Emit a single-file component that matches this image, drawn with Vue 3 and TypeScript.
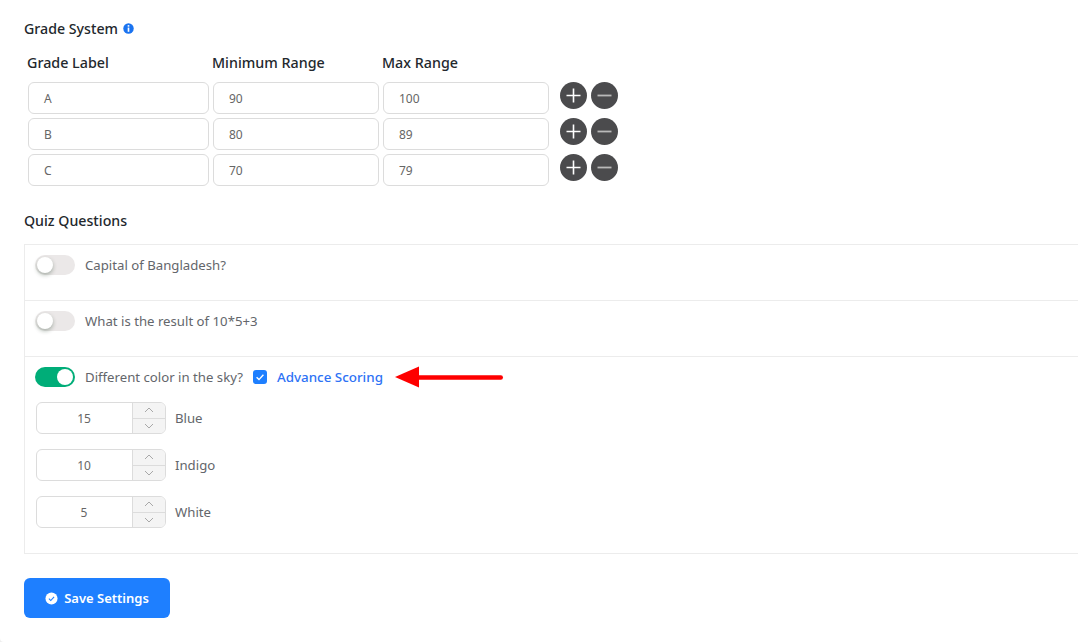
<script setup lang="ts">
interface Grade { label: string; min: string; max: string }
interface Answer { score: number; name: string }

const grades: Grade[] = [
  { label: 'A', min: '90', max: '100' },
  { label: 'B', min: '80', max: '89' },
  { label: 'C', min: '70', max: '79' },
]
const answers: Answer[] = [
  { score: 15, name: 'Blue' },
  { score: 10, name: 'Indigo' },
  { score: 5, name: 'White' },
]
</script>

<template>
  <div class="page">
    <div class="heading">
      <span>Grade System</span>
      <svg class="info" viewBox="0 0 12 12" width="11" height="11">
        <circle cx="6" cy="6" r="5.7" fill="#1a73f0" />
        <rect x="5.1" y="2.3" width="1.8" height="1.7" fill="#fff" />
        <rect x="5.1" y="5" width="1.8" height="4.6" fill="#fff" />
      </svg>
    </div>

    <div class="grade-head">
      <span class="c1">Grade Label</span>
      <span class="c2">Minimum Range</span>
      <span class="c3">Max Range</span>
    </div>

    <div class="grade-rows">
      <div v-for="g in grades" :key="g.label" class="grade-row">
        <div class="field w1">{{ g.label }}</div>
        <div class="field w2">{{ g.min }}</div>
        <div class="field w2">{{ g.max }}</div>
        <div class="round-btns">
          <span class="round">
            <svg viewBox="0 0 27 27" width="27" height="27">
              <path d="M13.5 6.5v14M6.5 13.5h14" stroke="#fff" stroke-width="1.6" />
            </svg>
          </span>
          <span class="round">
            <svg viewBox="0 0 27 27" width="27" height="27">
              <path d="M6.5 13.5h14" stroke="#b9b9b9" stroke-width="1.8" />
            </svg>
          </span>
        </div>
      </div>
    </div>

    <div class="heading quiz-heading">Quiz Questions</div>

    <div class="quiz-box">
      <div class="question">
        <span class="toggle"><i class="knob"></i></span>
        <span class="q-text">Capital of Bangladesh?</span>
      </div>
      <div class="question">
        <span class="toggle"><i class="knob"></i></span>
        <span class="q-text">What is the result of 10*5+3</span>
      </div>
      <div class="question open">
        <div class="q-main">
          <span class="toggle on"><i class="knob"></i></span>
          <span class="q-text">Different color in the sky?</span>
          <span class="check">
            <svg viewBox="0 0 14 14" width="14" height="14">
              <path d="M3.6 7.2l2.4 2.4 4.4-4.8" fill="none" stroke="#fff" stroke-width="1.4" />
            </svg>
          </span>
          <span class="advance">Advance Scoring</span>
          <svg class="arrow" viewBox="0 0 110 22" width="110" height="22">
            <path d="M22 11.5h83.8" stroke="#fe0000" stroke-width="4.4" stroke-linecap="round" />
            <path d="M0 11L24 0.5v21z" fill="#fe0000" />
          </svg>
        </div>
        <div class="answers">
          <div v-for="a in answers" :key="a.name" class="answer">
            <div class="number">
              <div class="num-val">{{ a.score }}</div>
              <div class="spin">
                <span class="spin-btn">
                  <svg viewBox="0 0 10 6" width="10" height="6"><path d="M1 5l4-4 4 4" fill="none" stroke="#a8a8a8" /></svg>
                </span>
                <span class="spin-btn">
                  <svg viewBox="0 0 10 6" width="10" height="6"><path d="M1 1l4 4 4-4" fill="none" stroke="#a8a8a8" /></svg>
                </span>
              </div>
            </div>
            <span class="q-text">{{ a.name }}</span>
          </div>
        </div>
      </div>
    </div>

    <button class="save" type="button">
      <svg viewBox="0 0 14 14" width="13" height="13">
        <circle cx="7" cy="7" r="6.5" fill="#fff" />
        <path d="M4.2 7.2l2 2 3.6-4" fill="none" stroke="#1e7fff" stroke-width="1.2" />
      </svg>
      <span>Save Settings</span>
    </button>
  </div>
</template>

<style>
html, body { margin: 0; background: #eee; overflow: hidden; }
</style>

<style scoped>
.page {
  width: 1078px;
  height: 642px;
  box-sizing: border-box;
  padding: 18px 0 0 24px;
  overflow: hidden;
  font-family: "Noto Sans", "Open Sans", sans-serif;
  font-size: 13.2px;
  color: #5f6368;
  background: #fff;
  border-bottom-left-radius: 4px;
}
.heading {
  display: flex;
  align-items: center;
  gap: 5px;
  height: 20px;
  font-size: 14.2px;
  font-weight: 500;
  color: #23282d;
}
.grade-head {
  display: flex;
  margin-top: 14px;
  height: 20px;
  align-items: center;
  font-size: 14.3px;
  font-weight: 500;
  color: #23282d;
}
.c1 { width: 185px; padding-left: 3px; box-sizing: border-box; }
.c2 { width: 170px; padding-left: 3px; box-sizing: border-box; }
.c3 { padding-left: 3px; }
.grade-rows {
  display: flex;
  flex-direction: column;
  gap: 4px;
  margin-top: 10px;
  padding-left: 4px;
}
.grade-row { display: flex; align-items: flex-start; gap: 4px; }
.field {
  box-sizing: border-box;
  height: 32px;
  line-height: 32px;
  padding-left: 15px;
  border: 1px solid #dcdcdc;
  border-radius: 6px;
  font-size: 12px;
  color: #666;
}
.w1 { width: 181px; }
.w2 { width: 166px; }
.round-btns { display: flex; gap: 4px; margin-left: 7px; }
.round {
  display: block;
  width: 27px;
  height: 27px;
  border-radius: 50%;
  background: #4b4b4d;
}
.round svg { display: block; }
.quiz-heading { margin-top: 24px; }
.quiz-box {
  margin-top: 14px;
  width: 1060px;
  border: 1px solid #ececec;
  box-sizing: border-box;
}
.question {
  height: 56px;
  box-sizing: border-box;
  padding: 10px 0 0 10px;
  display: flex;
  align-items: flex-start;
  gap: 10px;
  border-bottom: 1px solid #ececec;
}
.question.open {
  display: block;
  height: 196px;
  border-bottom: 0;
}
.q-main { display: flex; align-items: center; gap: 10px; height: 20px; position: relative; }
.q-text { line-height: 20px; color: #63666b; }
.toggle {
  display: block;
  flex: none;
  width: 40px;
  height: 20px;
  border-radius: 10px;
  background: #ebe8e8;
  position: relative;
}
.toggle.on { background: #00ad78; }
.knob {
  position: absolute;
  top: 2px;
  left: 2px;
  width: 16px;
  height: 16px;
  border-radius: 50%;
  background: #fff;
  box-shadow: 0 2px 4px rgba(0, 35, 11, 0.3);
}
.toggle.on .knob { left: 22px; box-shadow: none; }
.check {
  display: block;
  width: 14px;
  height: 14px;
  border-radius: 3px;
  background: #1e7fff;
}
.check svg { display: block; }
.advance { color: #2e72f5; font-weight: 500; line-height: 20px; font-size: 13.4px; }
.arrow { position: absolute; left: 360px; top: -1px; }
.answers {
  display: flex;
  flex-direction: column;
  gap: 15px;
  margin-top: 15px;
  padding-left: 1px;
}
.answer { display: flex; align-items: center; gap: 9px; }
.number {
  display: flex;
  box-sizing: border-box;
  width: 130px;
  height: 32px;
  border: 1px solid #dcdcdc;
  border-radius: 6px;
  overflow: hidden;
}
.num-val {
  flex: 1;
  text-align: center;
  line-height: 31px;
  font-size: 12px;
  color: #666;
  padding-right: 1px;
}
.spin {
  width: 33px;
  box-sizing: border-box;
  display: flex;
  flex-direction: column;
  border-left: 1px solid #dcdcdc;
  background: #f4f4f4;
}
.spin-btn {
  flex: 1;
  display: flex;
  align-items: center;
  justify-content: center;
}
.spin-btn + .spin-btn { border-top: 1px solid #dcdcdc; }
.save {
  display: flex;
  align-items: center;
  justify-content: center;
  gap: 6px;
  margin-top: 24px;
  width: 146px;
  height: 40px;
  border: 0;
  border-radius: 6px;
  background: #1e7fff;
  color: #fff;
  font-family: inherit;
  font-size: 13px;
  font-weight: 600;
}
</style>
